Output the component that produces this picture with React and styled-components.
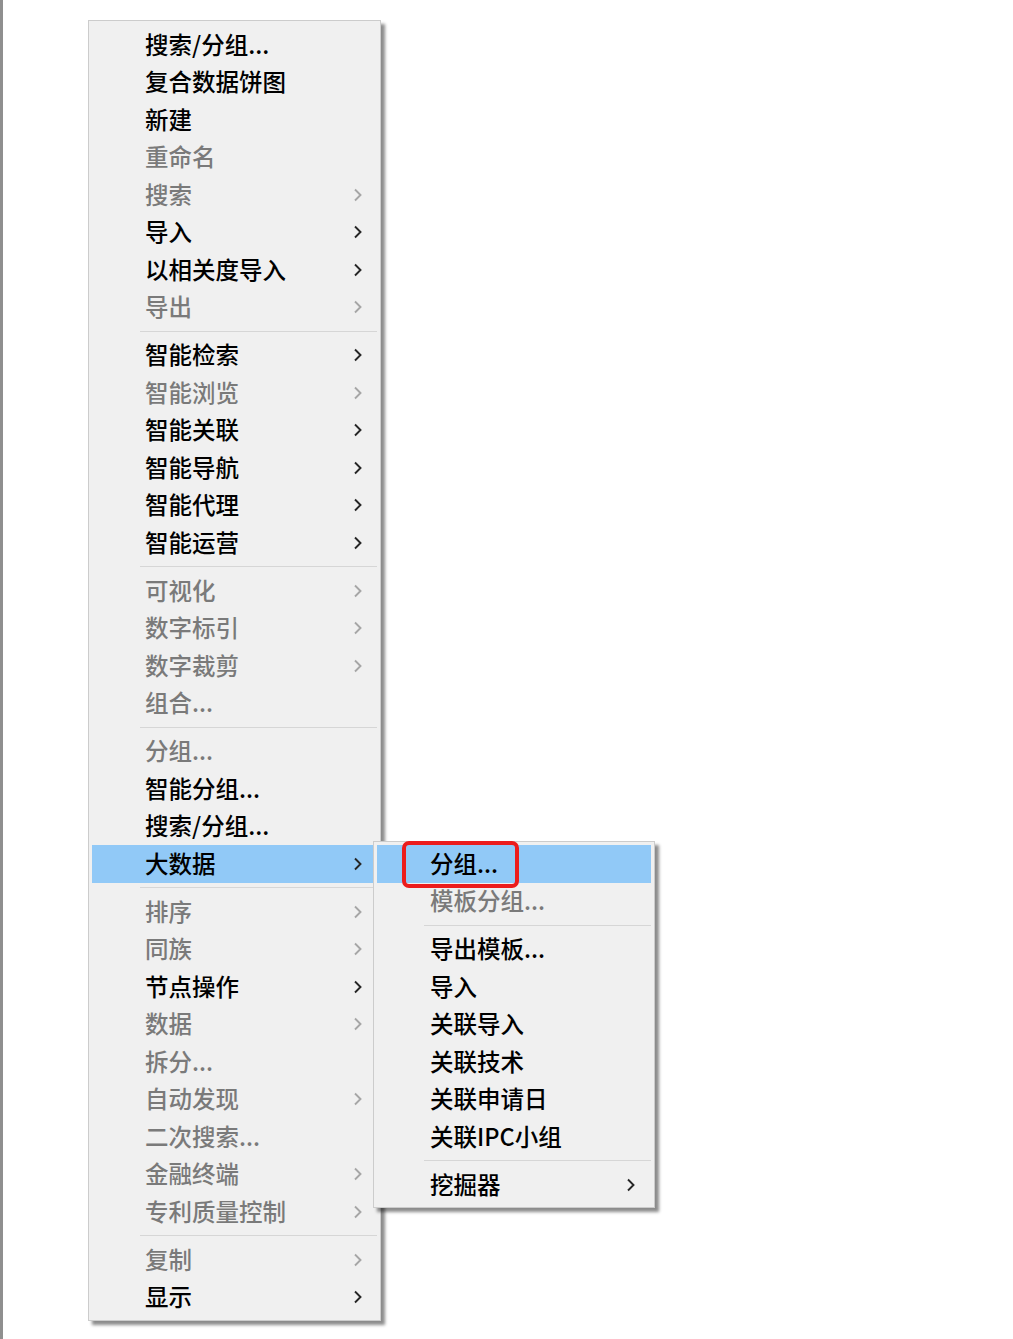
import React from 'react';
import styled, { createGlobalStyle } from 'styled-components';

const GlobalStyle = createGlobalStyle`
  body {
    margin: 0;
    background: #ffffff;
    font-family: "Noto Sans CJK SC", "Noto Sans", sans-serif;
  }
`;

const Page = styled.div`
  min-height: 1339px;
  box-sizing: border-box;
  border-left: 3px solid #8f8f8f;
  padding: 20px 0 0 85px;
`;

const Menu = styled.div`
  width: ${(p) => p.$width}px;
  box-sizing: border-box;
  display: flex;
  flex-direction: column;
  padding: ${(p) => p.$pad};
  background: #f0f0f0;
  border: 1px solid #cccccc;
  box-shadow: 4px 4px 3px rgba(0, 0, 0, 0.45);
`;

const SubMenu = styled(Menu)`
  position: absolute;
  left: 281px;
  top: -4px;
  z-index: 2;
`;

const Row = styled.div`
  position: relative;
  height: 37.5px;
  box-sizing: border-box;
  display: flex;
  align-items: center;
  justify-content: space-between;
  padding: 0 ${(p) => p.$right}px 0 53px;
  background: ${(p) => (p.$active ? '#91c9f7' : 'transparent')};
  color: ${(p) => (p.$disabled ? '#7a7a7a' : '#000000')};
  font-size: 23.5px;
  font-weight: 500;
  line-height: 1;
  white-space: nowrap;
`;

const Label = styled.span`
  margin-top: -1px;
`;

const Arrow = styled.svg`
  flex: none;
  color: ${(p) => (p.$disabled ? '#a6a6a6' : '#262626')};
`;

const Separator = styled.div`
  height: 10.5px;
  display: flex;
  align-items: center;
  padding-left: ${(p) => p.$indent}px;

  &::after {
    content: '';
    flex: 1;
    height: 1px;
    background: #d6d6d6;
  }
`;

const Callout = styled.span`
  position: absolute;
  left: 25px;
  top: -4px;
  width: 117px;
  height: 47px;
  box-sizing: border-box;
  border: 4.5px solid #ec1c1c;
  border-radius: 7px;
`;

const Chevron = ({ disabled }) => (
  <Arrow $disabled={disabled} width="9" height="14" viewBox="0 0 9 14">
    <polyline
      points="2,1.5 7.5,7 2,12.5"
      fill="none"
      stroke="currentColor"
      strokeWidth="1.9"
    />
  </Arrow>
);

const subGroups = [
  [
    { t: '分组...', active: true, mark: true },
    { t: '模板分组...', d: true },
  ],
  [
    { t: '导出模板...' },
    { t: '导入' },
    { t: '关联导入' },
    { t: '关联技术' },
    { t: '关联申请日' },
    { t: '关联IPC小组' },
  ],
  [{ t: '挖掘器', s: true }],
];

const mainGroups = [
  [
    { t: '搜索/分组...' },
    { t: '复合数据饼图' },
    { t: '新建' },
    { t: '重命名', d: true },
    { t: '搜索', d: true, s: true },
    { t: '导入', s: true },
    { t: '以相关度导入', s: true },
    { t: '导出', d: true, s: true },
  ],
  [
    { t: '智能检索', s: true },
    { t: '智能浏览', d: true, s: true },
    { t: '智能关联', s: true },
    { t: '智能导航', s: true },
    { t: '智能代理', s: true },
    { t: '智能运营', s: true },
  ],
  [
    { t: '可视化', d: true, s: true },
    { t: '数字标引', d: true, s: true },
    { t: '数字裁剪', d: true, s: true },
    { t: '组合...', d: true },
  ],
  [
    { t: '分组...', d: true },
    { t: '智能分组...' },
    { t: '搜索/分组...' },
    { t: '大数据', s: true, active: true, sub: subGroups },
  ],
  [
    { t: '排序', d: true, s: true },
    { t: '同族', d: true, s: true },
    { t: '节点操作', s: true },
    { t: '数据', d: true, s: true },
    { t: '拆分...', d: true },
    { t: '自动发现', d: true, s: true },
    { t: '二次搜索...', d: true },
    { t: '金融终端', d: true, s: true },
    { t: '专利质量控制', d: true, s: true },
  ],
  [
    { t: '复制', d: true, s: true },
    { t: '显示', s: true },
  ],
];

function MenuItems({ groups, indent, right }) {
  return groups.map((group, gi) => (
    <React.Fragment key={gi}>
      {gi > 0 && <Separator $indent={indent} />}
      {group.map((item) => (
        <Row
          key={item.t}
          $active={item.active}
          $disabled={item.d}
          $right={right}
        >
          <Label>{item.t}</Label>
          {item.s && <Chevron disabled={item.d} />}
          {item.mark && <Callout />}
          {item.sub && (
            <SubMenu $width={282} $pad="3px">
              <MenuItems groups={item.sub} indent={47} right={16} />
            </SubMenu>
          )}
        </Row>
      ))}
    </React.Fragment>
  ));
}

export default function App() {
  return (
    <>
      <GlobalStyle />
      <Page>
        <Menu $width={293} $pad="5px 3px 4px 3px">
          <MenuItems groups={mainGroups} indent={48} right={15} />
        </Menu>
      </Page>
    </>
  );
}
